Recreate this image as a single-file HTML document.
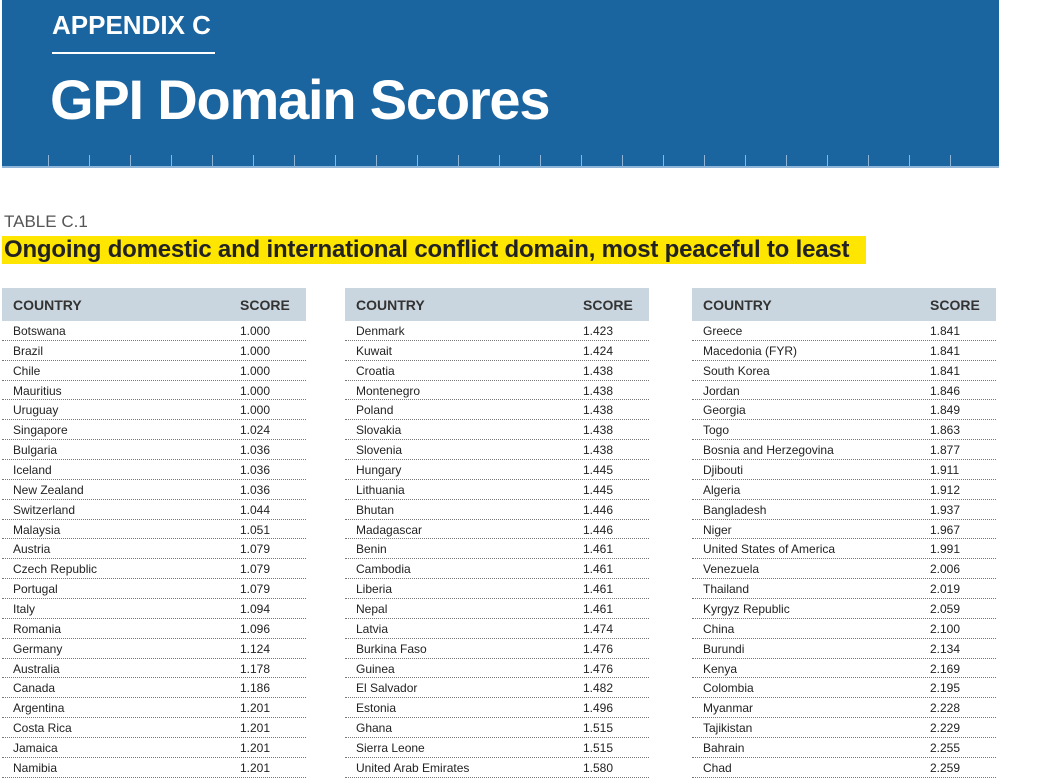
<!DOCTYPE html><html><head><meta charset="utf-8"><style>
*{margin:0;padding:0;box-sizing:border-box}
body{width:1051px;height:776px;overflow:hidden;background:#fff;font-family:"Liberation Sans",sans-serif;position:relative}
.ban{position:absolute;left:2px;top:0;width:997px;height:168px;background:#1a64a0;border-bottom:2px solid #8fb5d8}
.ap{position:absolute;left:50px;top:10px;color:#fff;font-weight:bold;font-size:26px;letter-spacing:0px}
.ul{position:absolute;left:50px;top:52px;width:163px;height:2px;background:#fff}
.t{position:absolute;left:48px;top:67px;color:#fff;font-weight:bold;font-size:56px;letter-spacing:-1.2px}
.tk{position:absolute;top:155px;width:1px;height:13px;background:#8fb5d8}
.tc{position:absolute;left:4px;top:212px;font-size:17px;color:#555}
.hl{position:absolute;left:2px;top:236px;height:28px;width:864px;background:#ffe600;font-weight:bold;font-size:24px;line-height:28px;color:#222;letter-spacing:-0.2px;padding-left:2px;white-space:nowrap;overflow:hidden}
.col{position:absolute;top:288px;width:304px}
.hd{height:33px;background:#cad6df;font-weight:bold;font-size:14px;line-height:34px;color:#333;position:relative}
.hd span,.r span{position:absolute;left:11px}
.hd b,.r b{position:absolute;left:238px;font-weight:bold}
.r b{font-weight:normal}
.r{height:19.86px;font-size:12px;line-height:21px;color:#222;position:relative;border-bottom:1px dotted #777}
</style></head><body>
<div class="ban"><div class="ap">APPENDIX C</div><div class="ul"></div><div class="t">GPI Domain Scores</div>
<div class="tk" style="left:46px"></div><div class="tk" style="left:87px"></div><div class="tk" style="left:128px"></div><div class="tk" style="left:169px"></div><div class="tk" style="left:210px"></div><div class="tk" style="left:251px"></div><div class="tk" style="left:292px"></div><div class="tk" style="left:333px"></div><div class="tk" style="left:374px"></div><div class="tk" style="left:415px"></div><div class="tk" style="left:456px"></div><div class="tk" style="left:497px"></div><div class="tk" style="left:538px"></div><div class="tk" style="left:579px"></div><div class="tk" style="left:620px"></div><div class="tk" style="left:661px"></div><div class="tk" style="left:702px"></div><div class="tk" style="left:743px"></div><div class="tk" style="left:784px"></div><div class="tk" style="left:825px"></div><div class="tk" style="left:866px"></div><div class="tk" style="left:907px"></div><div class="tk" style="left:948px"></div>
</div>
<div class="tc">TABLE C.1</div>
<div class="hl">Ongoing domestic and international conflict domain, most peaceful to least</div>
<div class="col" style="left:2px"><div class="hd"><span>COUNTRY</span><b>SCORE</b></div>
<div class="r"><span>Botswana</span><b>1.000</b></div><div class="r"><span>Brazil</span><b>1.000</b></div><div class="r"><span>Chile</span><b>1.000</b></div><div class="r"><span>Mauritius</span><b>1.000</b></div><div class="r"><span>Uruguay</span><b>1.000</b></div><div class="r"><span>Singapore</span><b>1.024</b></div><div class="r"><span>Bulgaria</span><b>1.036</b></div><div class="r"><span>Iceland</span><b>1.036</b></div><div class="r"><span>New Zealand</span><b>1.036</b></div><div class="r"><span>Switzerland</span><b>1.044</b></div><div class="r"><span>Malaysia</span><b>1.051</b></div><div class="r"><span>Austria</span><b>1.079</b></div><div class="r"><span>Czech Republic</span><b>1.079</b></div><div class="r"><span>Portugal</span><b>1.079</b></div><div class="r"><span>Italy</span><b>1.094</b></div><div class="r"><span>Romania</span><b>1.096</b></div><div class="r"><span>Germany</span><b>1.124</b></div><div class="r"><span>Australia</span><b>1.178</b></div><div class="r"><span>Canada</span><b>1.186</b></div><div class="r"><span>Argentina</span><b>1.201</b></div><div class="r"><span>Costa Rica</span><b>1.201</b></div><div class="r"><span>Jamaica</span><b>1.201</b></div><div class="r"><span>Namibia</span><b>1.201</b></div></div>
<div class="col" style="left:345px"><div class="hd"><span>COUNTRY</span><b>SCORE</b></div>
<div class="r"><span>Denmark</span><b>1.423</b></div><div class="r"><span>Kuwait</span><b>1.424</b></div><div class="r"><span>Croatia</span><b>1.438</b></div><div class="r"><span>Montenegro</span><b>1.438</b></div><div class="r"><span>Poland</span><b>1.438</b></div><div class="r"><span>Slovakia</span><b>1.438</b></div><div class="r"><span>Slovenia</span><b>1.438</b></div><div class="r"><span>Hungary</span><b>1.445</b></div><div class="r"><span>Lithuania</span><b>1.445</b></div><div class="r"><span>Bhutan</span><b>1.446</b></div><div class="r"><span>Madagascar</span><b>1.446</b></div><div class="r"><span>Benin</span><b>1.461</b></div><div class="r"><span>Cambodia</span><b>1.461</b></div><div class="r"><span>Liberia</span><b>1.461</b></div><div class="r"><span>Nepal</span><b>1.461</b></div><div class="r"><span>Latvia</span><b>1.474</b></div><div class="r"><span>Burkina Faso</span><b>1.476</b></div><div class="r"><span>Guinea</span><b>1.476</b></div><div class="r"><span>El Salvador</span><b>1.482</b></div><div class="r"><span>Estonia</span><b>1.496</b></div><div class="r"><span>Ghana</span><b>1.515</b></div><div class="r"><span>Sierra Leone</span><b>1.515</b></div><div class="r"><span>United Arab Emirates</span><b>1.580</b></div></div>
<div class="col" style="left:692px"><div class="hd"><span>COUNTRY</span><b>SCORE</b></div>
<div class="r"><span>Greece</span><b>1.841</b></div><div class="r"><span>Macedonia (FYR)</span><b>1.841</b></div><div class="r"><span>South Korea</span><b>1.841</b></div><div class="r"><span>Jordan</span><b>1.846</b></div><div class="r"><span>Georgia</span><b>1.849</b></div><div class="r"><span>Togo</span><b>1.863</b></div><div class="r"><span>Bosnia and Herzegovina</span><b>1.877</b></div><div class="r"><span>Djibouti</span><b>1.911</b></div><div class="r"><span>Algeria</span><b>1.912</b></div><div class="r"><span>Bangladesh</span><b>1.937</b></div><div class="r"><span>Niger</span><b>1.967</b></div><div class="r"><span>United States of America</span><b>1.991</b></div><div class="r"><span>Venezuela</span><b>2.006</b></div><div class="r"><span>Thailand</span><b>2.019</b></div><div class="r"><span>Kyrgyz Republic</span><b>2.059</b></div><div class="r"><span>China</span><b>2.100</b></div><div class="r"><span>Burundi</span><b>2.134</b></div><div class="r"><span>Kenya</span><b>2.169</b></div><div class="r"><span>Colombia</span><b>2.195</b></div><div class="r"><span>Myanmar</span><b>2.228</b></div><div class="r"><span>Tajikistan</span><b>2.229</b></div><div class="r"><span>Bahrain</span><b>2.255</b></div><div class="r"><span>Chad</span><b>2.259</b></div></div>
</body></html>
